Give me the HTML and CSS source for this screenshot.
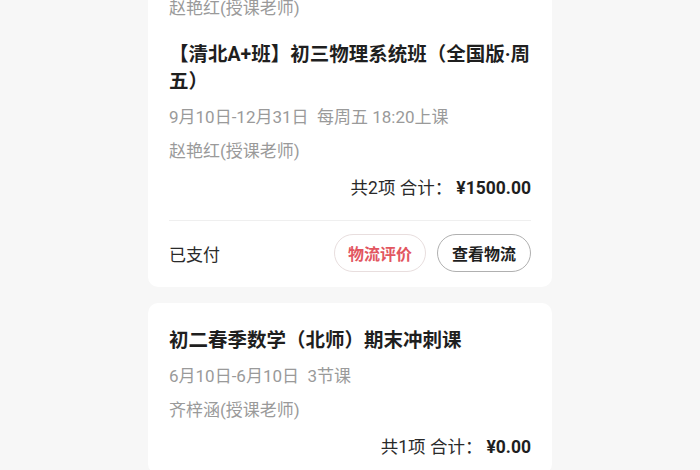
FILE: index.html
```html
<!DOCTYPE html>
<html lang="zh-CN">
<head>
<meta charset="utf-8">
<title>订单列表</title>
<link rel="stylesheet" href="styles.css">
</head>
<body>
<main class="list">
  <section class="card">
    <div class="course course-cut">
      <p class="meta">赵艳红(授课老师)</p>
    </div>
    <div class="course">
      <h2 class="title">【清北A+班】初三物理系统班（全国版·周五）</h2>
      <p class="meta meta-date">9月10日-12月31日&nbsp;&nbsp;每周五 18:20上课</p>
      <p class="meta">赵艳红(授课老师)</p>
    </div>
    <p class="total">共2项 合计：<b>¥1500.00</b></p>
    <div class="footer">
      <span class="status">已支付</span>
      <div class="actions">
        <button class="btn btn-red">物流评价</button>
        <button class="btn btn-dark">查看物流</button>
      </div>
    </div>
  </section>
  <section class="card">
    <div class="course">
      <h2 class="title">初二春季数学（北师）期末冲刺课</h2>
      <p class="meta meta-date">6月10日-6月10日&nbsp;&nbsp;3节课</p>
      <p class="meta">齐梓涵(授课老师)</p>
    </div>
    <p class="total">共1项 合计：<b>¥0.00</b></p>
  </section>
</main>
</body>
</html>
```
FILE: styles.css
```css
* { box-sizing: border-box; }
html, body {
  margin: 0;
  padding: 0;
  background: #f7f7f7;
  font-family: Roboto, "Noto Sans CJK SC", sans-serif;
  color: #222;
  overflow: hidden;
}
.list {
  width: 404px;
  margin: -28px auto 0;
  display: flex;
  flex-direction: column;
  gap: 16px;
}
.card {
  background: #fff;
  border-radius: 10px;
  padding: 24px 21px 15px;
}
.course + .course { margin-top: 21px; }
.title {
  margin: 0;
  font-size: 19.5px;
  line-height: 27px;
  font-weight: 700;
  color: #1f1f1f;
}
.meta {
  margin: 10px 0 0;
  font-size: 17px;
  line-height: 24px;
  color: #9a9a9a;
}
.course-cut .meta { margin-top: 0; }
.total {
  margin: 13px 0 0;
  text-align: right;
  font-size: 17.5px;
  line-height: 24px;
  color: #2a2a2a;
}
.total b { font-weight: 700; color: #1f1f1f; margin-left: 4px; }
.footer {
  margin-top: 20px;
  border-top: 1px solid #efefef;
  padding-top: 13px;
  display: flex;
  align-items: center;
  justify-content: space-between;
}
.status {
  font-size: 17px;
  color: #2a2a2a;
}
.actions {
  display: flex;
  gap: 11px;
}
.btn {
  height: 38px;
  padding: 0 14px;
  border-radius: 19px;
  background: #fff;
  font-family: inherit;
  font-size: 16px;
  font-weight: 700;
  cursor: pointer;
}
.btn-red {
  color: #e2565f;
  border: 1px solid #e8dede;
  padding: 0 13px;
}
.btn-dark {
  color: #1f1f1f;
  border: 1px solid #b0b0b0;
}
```
